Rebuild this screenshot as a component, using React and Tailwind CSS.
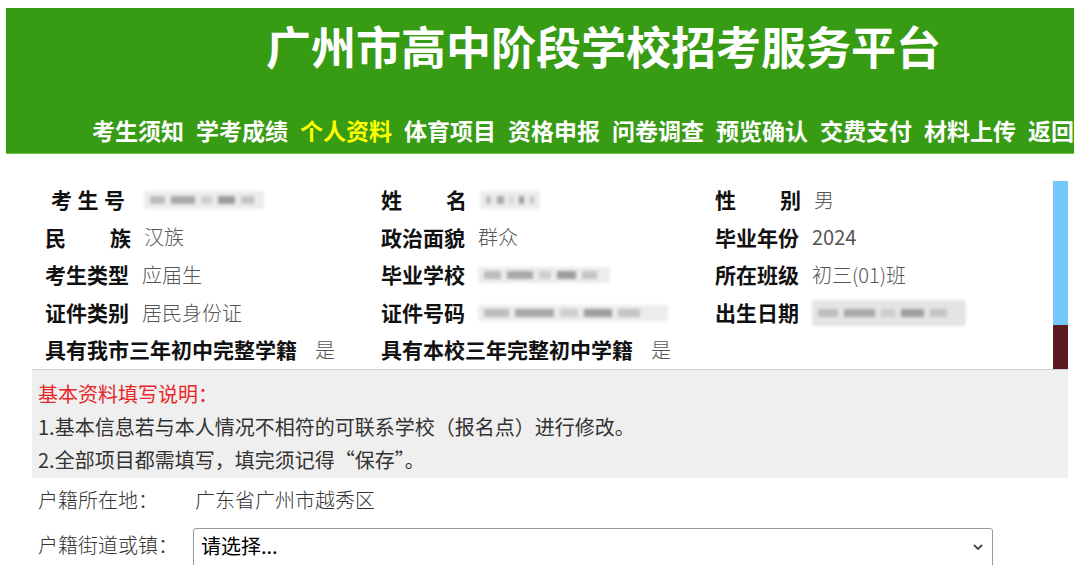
import React from 'react';

const navItems = ['考生须知', '学考成绩', '个人资料', '体育项目', '资格申报', '问卷调查', '预览确认', '交费支付', '材料上传', '返回首页'];

// blurred placeholder for masked personal data
const Masked = ({ w, h = 18, light = false }) => (
  <div
    className={`flex items-center gap-[6px] rounded-[3px] px-[6px] blur-[1.5px] ${light ? 'bg-[#e4e4e4]' : 'bg-[#ececec]'}`}
    style={{ width: w, height: h }}
  >
    <span className="h-[8px] w-[14%] bg-[#bdbdbd]" />
    <span className="h-[8px] w-[22%] bg-[#a9a9a9]" />
    <span className="h-[8px] w-[10%] bg-[#cfcfcf]" />
    <span className="h-[8px] w-[16%] bg-[#9e9e9e]" />
    <span className="h-[8px] w-[12%] bg-[#c4c4c4]" />
  </div>
);

const Label = ({ children, spread, inset }) => (
  <span
    className={`font-bold text-[21px] text-[#111] shrink-0 ${spread ? 'w-[86px] flex justify-between' : ''} ${inset ? 'px-[6px]' : ''}`}
  >
    {spread ? children.split('').map((c, i) => <span key={i}>{c}</span>) : children}
  </span>
);

const Value = ({ children, sans }) => (
  <span className={`text-[20px] text-[#555] ${sans ? '' : 'font-light'}`}>
    {children}
  </span>
);

const Cell = ({ label, spread, inset, children, gap = 'gap-[13px]' }) => (
  <div className={`flex items-center h-[37.5px] ${gap}`}>
    <Label spread={spread} inset={inset}>{label}</Label>
    {children}
  </div>
);

export default function App() {
  return (
    <div
      className="w-[1080px] h-[565px] overflow-hidden bg-white"
      style={{ fontFamily: '"Noto Sans CJK SC", "Noto Sans", sans-serif' }}
    >
      {/* header */}
      <div className="mx-[6px] mt-[8px] h-[146px] bg-[#379b13] border-b border-[#6cc24a] flex flex-col overflow-hidden">
        <h1 className="pt-[11px] pl-[260px] text-[45px] leading-[54px] font-bold text-white whitespace-nowrap">
          广州市高中阶段学校招考服务平台
        </h1>
        <nav className="mt-[42px] pl-[86px] flex whitespace-nowrap text-[23px] leading-[30px] font-bold">
          {navItems.map((item) => (
            <span
              key={item}
              className={`mr-[12px] shrink-0 ${item === '个人资料' ? 'text-[#ffff00]' : 'text-white'}`}
            >
              {item}
            </span>
          ))}
        </nav>
      </div>

      {/* body */}
      <div className="ml-[32px] w-[1036px]">
        <div className="flex pt-[27px]">
          <div className="flex-1 pl-[13px] grid grid-cols-[336px_334px_1fr]">
            <Cell label="考生号" spread inset><Masked w={120} /></Cell>
            <Cell label="姓名" spread><Masked w={60} /></Cell>
            <Cell label="性别" spread><Value>男</Value></Cell>

            <Cell label="民族" spread><Value>汉族</Value></Cell>
            <Cell label="政治面貌"><Value>群众</Value></Cell>
            <Cell label="毕业年份"><Value sans>2024</Value></Cell>

            <Cell label="考生类型"><Value>应届生</Value></Cell>
            <Cell label="毕业学校"><Masked w={132} h={16} /></Cell>
            <Cell label="所在班级"><Value>初三(01)班</Value></Cell>

            <Cell label="证件类别"><Value>居民身份证</Value></Cell>
            <Cell label="证件号码"><Masked w={190} h={16} /></Cell>
            <Cell label="出生日期"><Masked w={154} h={26} light /></Cell>

            <Cell label="具有我市三年初中完整学籍" gap="gap-[18px]"><Value>是</Value></Cell>
            <Cell label="具有本校三年完整初中学籍" gap="gap-[18px]"><Value>是</Value></Cell>
            <div />
          </div>
          {/* photo (cropped) */}
          <div className="w-[15px] h-[188px] bg-[#74c8fa] flex flex-col justify-end">
            <div className="h-[44px] bg-[#5b1a1f]" />
          </div>
        </div>

        {/* instructions */}
        <div className="h-[109px] bg-[#efefef] border-t border-[#d0d0d0] pl-[6px] pt-[7px] text-[20px] leading-[33px] text-[#333]">
          <div className="text-[#e8262a]">基本资料填写说明：</div>
          <div>1.基本信息若与本人情况不相符的可联系学校（报名点）进行修改。</div>
          <div>2.全部项目都需填写，填完须记得“保存”。</div>
        </div>

        {/* hukou */}
        <div className="pl-[6px] text-[20px] text-[#333] font-light">
          <div className="flex items-center h-[44px]">
            <span className="w-[157px]">户籍所在地：</span>
            <span>广东省广州市越秀区</span>
          </div>
          <div className="flex items-start mt-[6px]">
            <span className="w-[155px] pt-[2px]">户籍街道或镇：</span>
            <div className="w-[800px] h-[40px] border border-[#9a9a9a] rounded-[3px] flex justify-between pl-[7px] pr-[8px] pt-[2px]">
              <span className="text-[20px] font-normal text-black">请选择...</span>
              <svg width="12" height="12" viewBox="0 0 12 12" className="mt-[10px]">
                <path d="M2 4l4 4 4-4" fill="none" stroke="#444" strokeWidth="1.8" />
              </svg>
            </div>
          </div>
        </div>
      </div>
    </div>
  );
}
